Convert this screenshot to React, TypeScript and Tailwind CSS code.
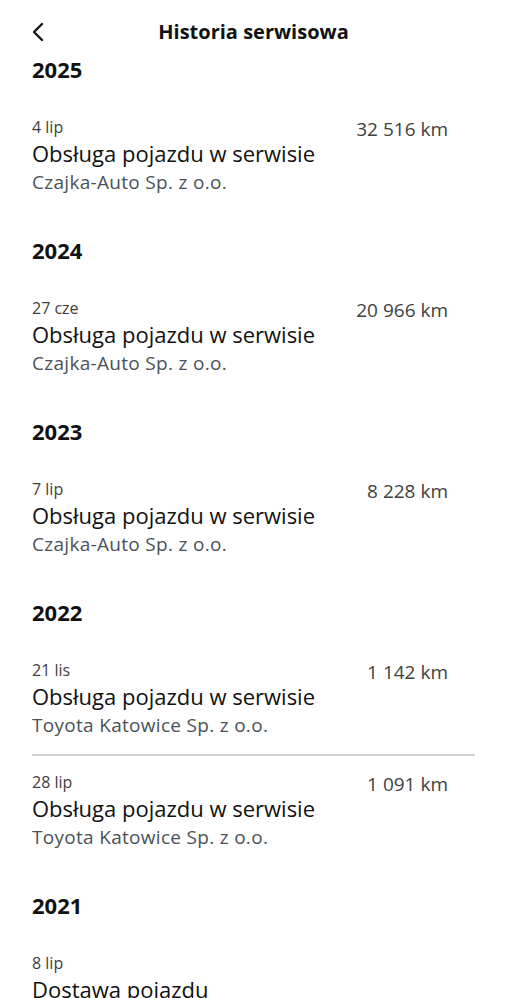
import { ChevronLeft } from "lucide-react";

type Entry = {
  date: string;
  km: string;
  title: string;
  place: string;
};

type Section = {
  year: string;
  entries: Entry[];
};

const sections: Section[] = [
  {
    year: "2025",
    entries: [{ date: "4 lip", km: "32 516 km", title: "Obsługa pojazdu w serwisie", place: "Czajka-Auto Sp. z o.o." }],
  },
  {
    year: "2024",
    entries: [{ date: "27 cze", km: "20 966 km", title: "Obsługa pojazdu w serwisie", place: "Czajka-Auto Sp. z o.o." }],
  },
  {
    year: "2023",
    entries: [{ date: "7 lip", km: "8 228 km", title: "Obsługa pojazdu w serwisie", place: "Czajka-Auto Sp. z o.o." }],
  },
  {
    year: "2022",
    entries: [
      { date: "21 lis", km: "1 142 km", title: "Obsługa pojazdu w serwisie", place: "Toyota Katowice Sp. z o.o." },
      { date: "28 lip", km: "1 091 km", title: "Obsługa pojazdu w serwisie", place: "Toyota Katowice Sp. z o.o." },
    ],
  },
  {
    year: "2021",
    entries: [{ date: "8 lip", km: "", title: "Dostawa pojazdu", place: "" }],
  },
];

const EntryRow = ({ entry }: { entry: Entry }) => (
  <div>
    <div className="flex h-[20px] items-start justify-between pr-[27px]">
      <span className="text-[16px] leading-[20px] text-[#404040]">{entry.date}</span>
      <span className="translate-y-[2px] text-[19px] leading-[20px] text-[#404040]">{entry.km}</span>
    </div>
    <div className="mt-[3px] text-[22px] leading-[26px] text-[#111]">{entry.title}</div>
    {entry.place && (
      <div className="mt-[3px] text-[19px] leading-[26px] tracking-[0.3px] text-[#4a5259]">{entry.place}</div>
    )}
  </div>
);

export default function App() {
  return (
    <div className="flex h-[998px] w-full flex-col overflow-hidden bg-white font-['Open_Sans',sans-serif]">
      <header className="relative flex h-[63px] shrink-0 items-center justify-center bg-white">
        <button type="button" className="absolute left-[22px] top-[16px] text-[#111]">
          <ChevronLeft size={32} strokeWidth={1.8} />
        </button>
        <h1 className="text-[20px] font-bold text-[#111]">Historia serwisowa</h1>
      </header>
      <div className="flex-1 overflow-hidden">
        <div className="-mt-[8px] px-[32px]">
          {sections.map((section) => (
            <section key={section.year} className="pb-[41px]">
              <h2 className="text-[22px] font-bold leading-[28px] text-[#111]">{section.year}</h2>
              <div className="mt-[34px]">
                {section.entries.map((entry, i) => (
                  <div key={entry.date}>
                    {i > 0 && <div className="mb-[16px] mt-[16px] h-[2px] w-full bg-[#cfcfcf]" />}
                    <EntryRow entry={entry} />
                  </div>
                ))}
              </div>
            </section>
          ))}
        </div>
      </div>
    </div>
  );
}
